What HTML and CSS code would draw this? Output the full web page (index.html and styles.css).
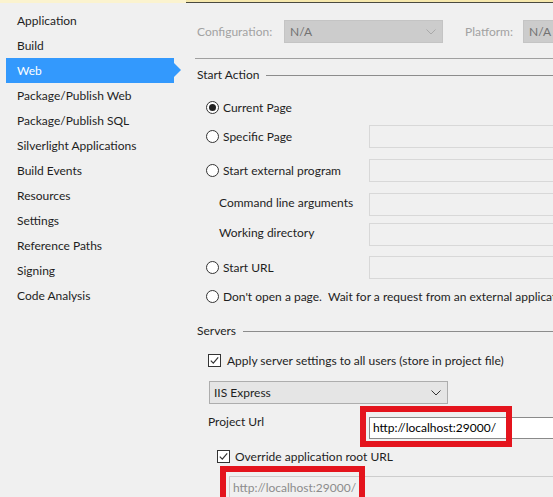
FILE: index.html
```html
<!DOCTYPE html>
<html>
<head>
<meta charset="utf-8">
<link rel="stylesheet" href="styles.css">
</head>
<body>
<div class="window">
  <nav class="sidebar">
    <div class="strip-left"></div>
    <ul class="nav-list">
      <li class="nav-item">Application</li>
      <li class="nav-item">Build</li>
      <li class="nav-item active">Web</li>
      <li class="nav-item">Package/Publish Web</li>
      <li class="nav-item">Package/Publish SQL</li>
      <li class="nav-item">Silverlight Applications</li>
      <li class="nav-item">Build Events</li>
      <li class="nav-item">Resources</li>
      <li class="nav-item">Settings</li>
      <li class="nav-item">Reference Paths</li>
      <li class="nav-item">Signing</li>
      <li class="nav-item">Code Analysis</li>
    </ul>
  </nav>
  <main class="panel">
    <div class="strip-right"></div>
    <div class="content">
      <div class="config-row">
        <span class="dim-label">Configuration:</span>
        <div class="combo combo-disabled combo-config">
          <span>N/A</span>
          <svg class="chev" width="10" height="6" viewBox="0 0 10 6"><path d="M0.5 0.5 L5 5 L9.5 0.5" fill="none" stroke="#a9a9a9" stroke-width="1"/></svg>
        </div>
        <span class="dim-label platform-label">Platform:</span>
        <div class="combo combo-disabled combo-platform"><span>N/A</span></div>
      </div>
      <div class="rule"></div>

      <div class="group-head head-start"><span class="head-text">Start Action</span><div class="group-line"></div></div>

      <div class="row row-current">
        <label class="opt">
          <svg class="radio" width="13" height="13" viewBox="0 0 13 13"><circle cx="6.5" cy="6.5" r="6" fill="#fff" stroke="#333" stroke-width="1"/><circle cx="6.5" cy="6.5" r="3.5" fill="#222"/></svg>
          <span>Current Page</span>
        </label>
      </div>
      <div class="row row-gap-s row-field">
        <label class="opt">
          <svg class="radio" width="13" height="13" viewBox="0 0 13 13"><circle cx="6.5" cy="6.5" r="6" fill="#fff" stroke="#333" stroke-width="1"/></svg>
          <span>Specific Page</span>
        </label>
        <div class="box box-off"></div>
      </div>
      <div class="row row-gap-l row-field">
        <label class="opt">
          <svg class="radio" width="13" height="13" viewBox="0 0 13 13"><circle cx="6.5" cy="6.5" r="6" fill="#fff" stroke="#333" stroke-width="1"/></svg>
          <span>Start external program</span>
        </label>
        <div class="box box-off"></div>
      </div>
      <div class="row row-gap-l row-field">
        <span class="sub-label">Command line arguments</span>
        <div class="box box-off"></div>
      </div>
      <div class="row row-gap-m row-field">
        <span class="sub-label">Working directory</span>
        <div class="box box-off"></div>
      </div>
      <div class="row row-gap-ml row-field">
        <label class="opt">
          <svg class="radio" width="13" height="13" viewBox="0 0 13 13"><circle cx="6.5" cy="6.5" r="6" fill="#fff" stroke="#333" stroke-width="1"/></svg>
          <span>Start URL</span>
        </label>
        <div class="box box-off"></div>
      </div>
      <div class="row-wide row-gap-s">
        <label class="opt nowrap">
          <svg class="radio" width="13" height="13" viewBox="0 0 13 13"><circle cx="6.5" cy="6.5" r="6" fill="#fff" stroke="#333" stroke-width="1"/></svg>
          <span>Don't open a page.&nbsp; Wait for a request from an external application.</span>
        </label>
      </div>

      <div class="group-head head-servers"><span class="head-text">Servers</span><div class="group-line"></div></div>

      <label class="check-row check-apply">
        <svg class="check" width="13" height="13" viewBox="0 0 13 13"><rect x="0.5" y="0.5" width="12" height="12" fill="#fff" stroke="#333" stroke-width="1"/><path d="M2.8 6.6 L5.3 9.2 L10.2 3.4" fill="none" stroke="#333" stroke-width="1.2"/></svg>
        <span>Apply server settings to all users (store in project file)</span>
      </label>

      <div class="combo combo-iis">
        <span>IIS Express</span>
        <svg class="chev" width="10" height="6" viewBox="0 0 10 6"><path d="M0.5 0.5 L5 5 L9.5 0.5" fill="none" stroke="#333" stroke-width="1"/></svg>
      </div>

      <div class="url-row">
        <span class="url-label">Project Url</span>
        <div class="box box-on">http://localhost:29000/</div>
      </div>

      <label class="check-row check-override">
        <svg class="check" width="13" height="13" viewBox="0 0 13 13"><rect x="0.5" y="0.5" width="12" height="12" fill="#fff" stroke="#333" stroke-width="1"/><path d="M2.8 6.6 L5.3 9.2 L10.2 3.4" fill="none" stroke="#333" stroke-width="1.2"/></svg>
        <span>Override application root URL</span>
      </label>

      <div class="box box-off box-root">http://localhost:29000/</div>
    </div>
  </main>
  <div class="mark mark-url"></div>
  <div class="mark mark-root"></div>
</div>
</body>
</html>
```
FILE: styles.css
```css
* { box-sizing: border-box; }
html, body { margin: 0; padding: 0; }
body {
  background: #f0f0f0;
  font-family: Lato, "Liberation Sans", sans-serif;
  font-size: 12px;
  color: #1e1e1e;
}
.window {
  position: relative;
  width: 553px;
  height: 497px;
  overflow: hidden;
  display: flex;
  background: #f0f0f0;
}
.sidebar {
  width: 186px;
  flex: none;
}
.strip-left {
  height: 3px;
  background: #fbf3cf;
}
.nav-list {
  list-style: none;
  margin: 5px 0 0 6px;
  padding: 0;
  width: 168px;
}
.nav-item {
  position: relative;
  height: 25px;
  line-height: 25px;
  padding-left: 11px;
  white-space: nowrap;
}
.nav-item.active {
  background: #3399fd;
  color: #fff;
}
.nav-item.active::after {
  content: "";
  position: absolute;
  left: 168px;
  top: 5px;
  border-left: 7px solid #3399fd;
  border-top: 7.5px solid transparent;
  border-bottom: 7.5px solid transparent;
}
.panel {
  width: 480px;
  flex: none;
}
.strip-right {
  height: 3px;
  background: #f6e8ad;
  border-bottom: 1px solid #4a4a40;
}
.content {
  padding-left: 9px;
}
.config-row {
  display: flex;
  align-items: center;
  height: 23px;
  margin-top: 17px;
}
.dim-label {
  color: #a2a2a2;
  padding-left: 2px;
  width: 89px;
}
.platform-label {
  width: auto;
  padding-left: 0;
  margin-left: 22px;
  margin-right: 10px;
}
.combo {
  display: flex;
  align-items: center;
  justify-content: space-between;
  height: 23px;
  padding: 0 6px 0 5px;
}
.combo-disabled {
  background: #cccccc;
  border: 1px solid #c4c4c4;
  color: #727272;
}
.combo-config { width: 159px; }
.combo-platform { width: 60px; }
.chev { flex: none; }
.rule {
  height: 1px;
  background: #a0a0a0;
  margin-top: 15px;
}
.group-head {
  display: flex;
  align-items: center;
  height: 16px;
  padding-left: 2px;
}
.head-text { padding-bottom: 1px; }
.head-start { margin-top: 8px; }
.head-servers { margin-top: 15px; }
.group-line {
  flex: 1;
  height: 1px;
  background: #8c8c8c;
  margin-left: 7px;
}
.row {
  display: grid;
  grid-template-columns: 174px 1fr;
  align-items: center;
  height: 23px;
}
.row-wide {
  display: flex;
  align-items: center;
  height: 23px;
}
.row-current { margin-top: 13px; }
.row-gap-s { margin-top: 6px; }
.row-gap-m { margin-top: 7px; }
.row-gap-ml { margin-top: 10px; }
.row-gap-l { margin-top: 11px; }
.opt {
  display: flex;
  align-items: center;
  padding-left: 11px;
  gap: 4px;
}
.radio, .check { flex: none; }
.nowrap { white-space: nowrap; }
.sub-label {
  padding-left: 24px;
  margin-top: -4px;
}
.box {
  height: 23px;
  border: 1px solid #d8d8d8;
  background: #f0f0f0;
  padding-left: 3px;
  line-height: 21px;
  white-space: nowrap;
}
.box-on {
  background: #fff;
  border-color: #8a8a8a;
  height: 22px;
  line-height: 20px;
  color: #000;
  margin-top: 3px;
}
.check-row {
  display: flex;
  align-items: center;
  height: 18px;
}
.check-apply {
  margin-top: 12px;
  padding-left: 13px;
  gap: 6px;
}
.check-override {
  margin-top: 8px;
  padding-left: 22px;
  gap: 5px;
}
.combo-iis {
  margin-top: 12px;
  margin-left: 14px;
  width: 239px;
  background: #e5e5e5;
  border: 1px solid #adadad;
  padding: 0 6px 0 4px;
}
.url-row {
  display: grid;
  grid-template-columns: 174px 1fr;
  margin-top: 10px;
}
.url-label {
  padding-left: 13px;
  line-height: 16px;
}
.box-root {
  margin-top: 11px;
  margin-left: 34px;
  color: #8c8c8c;
  border-color: #cdcdcd;
}
.mark {
  position: absolute;
  border: 6px solid #e4141d;
}
.mark-url {
  left: 360px;
  top: 406px;
  width: 152px;
  height: 41px;
}
.mark-root {
  left: 220px;
  top: 466px;
  width: 145px;
  height: 40px;
}
```
